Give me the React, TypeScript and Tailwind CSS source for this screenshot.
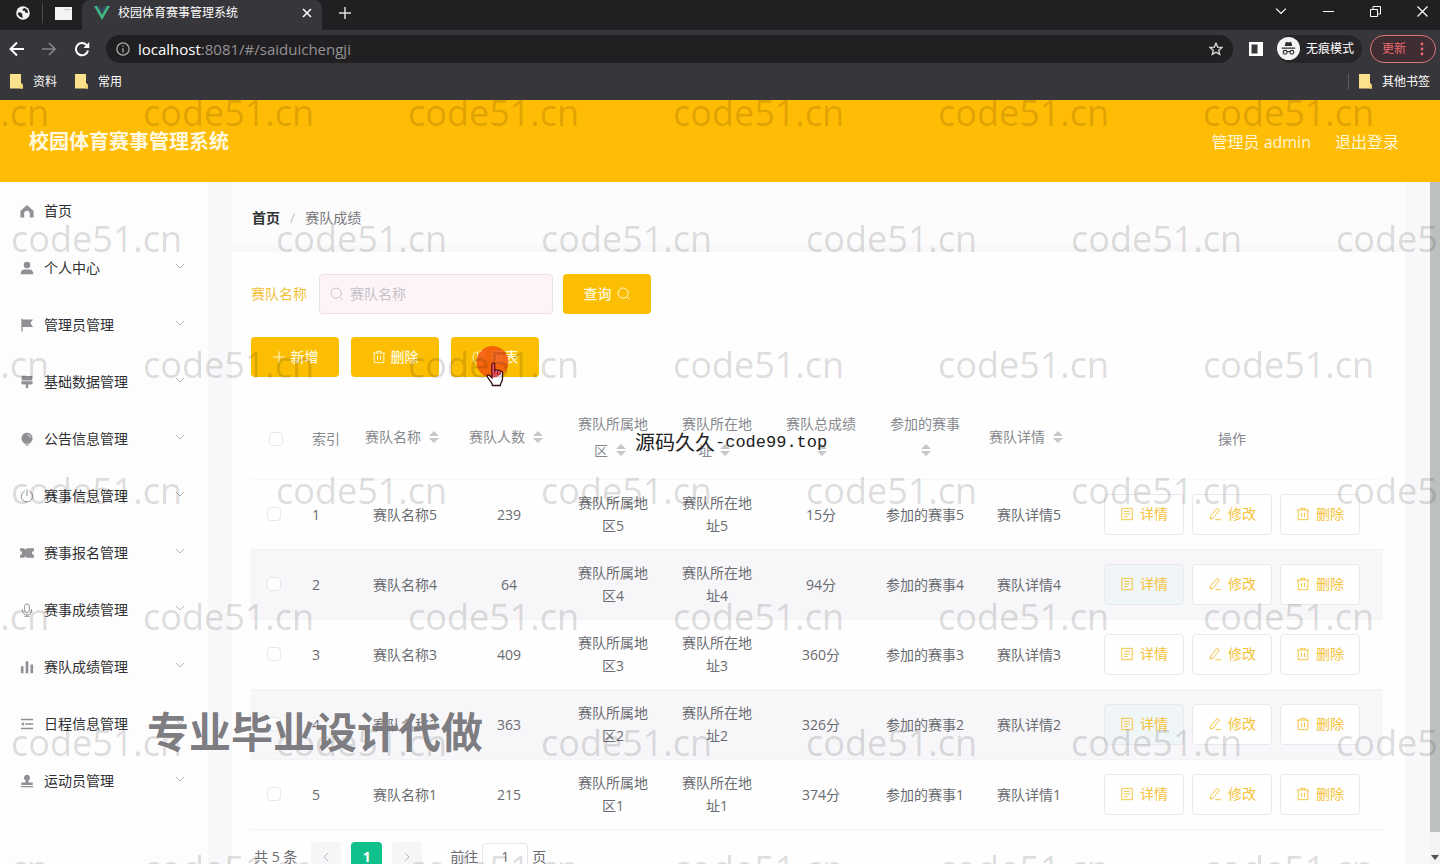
import type { ReactNode } from "react";

const menuItems = [
  { name: "首页", icon: "home", children: false },
  { name: "个人中心", icon: "user", children: true },
  { name: "管理员管理", icon: "flag", children: true },
  { name: "基础数据管理", icon: "brush", children: true },
  { name: "公告信息管理", icon: "bulb", children: true },
  { name: "赛事信息管理", icon: "power", children: true },
  { name: "赛事报名管理", icon: "ticket", children: true },
  { name: "赛事成绩管理", icon: "mic", children: true },
  { name: "赛队成绩管理", icon: "bars", children: true },
  { name: "日程信息管理", icon: "fold", children: true },
  { name: "运动员管理", icon: "stamp", children: true },
];

const columns = [
  "赛队名称",
  "赛队人数",
  "赛队所属地区",
  "赛队所在地址",
  "赛队总成绩",
  "参加的赛事",
  "赛队详情",
];

const teams = [
  { id: 5, people: 239, score: "15分" },
  { id: 4, people: 64, score: "94分" },
  { id: 3, people: 409, score: "360分" },
  { id: 2, people: 363, score: "326分" },
  { id: 1, people: 215, score: "374分" },
];

const menuIcons: Record<string, ReactNode> = {
  home: <path d="M8 1 .5 8V15.500h4.300V11a3.200 3.200 0 0 1 6.400 0v4.500h4.300V8z" />,
  user: (
    <>
      <circle cx="8" cy="4.5" r="3.7" />
      <path d="M.8 15c0-3.4 1.6-5.3 4.4-5.3h5.6c2.8 0 4.4 1.9 4.4 5.3z" />
    </>
  ),
  flag: <path d="M1.5.8H3v.9h11.8l-2.9 4.1 2.9 4.4H3V15.5H1.5z" />,
  brush: (
    <>
      <path d="M2 1h12v5.2H2zM1.5 7.2h13v1.6c0 1.2-.8 2-2 2h-9c-1.200 0-2-.8-2-2z" />
      <path d="M6.700 10.500h2.600V15H6.700z" />
    </>
  ),
  bulb: (
    <>
      <path d="M8 .8a6.300 6.300 0 0 0-3.700 11.400l.8 1.300h5.800l.8-1.300A6.300 6.300 0 0 0 8 .8zM5.800 14.300h4.400v1.200H5.800z" />
      <path d="M8.500 3c1.900.2 3.200 1.500 3.500 3.400" fill="none" stroke="#fff" strokeWidth="1" />
    </>
  ),
  power: (
    <path
      d="M5 2.400a6.600 6.600 0 1 0 6 0M8 1v6.500"
      fill="none"
      stroke="currentColor"
      strokeWidth="1.100"
      strokeLinecap="round"
    />
  ),
  ticket: (
    <path d="M0 2.500h4.800l1.400 1.700 1.400-1.700H16v3.200A2.300 2.300 0 0 0 16 10.300v3.200H7.600l-1.400-1.700-1.400 1.700H0v-3.200a2.300 2.300 0 0 0 0-4.600z" />
  ),
  mic: (
    <path
      d="M5.300 3.700a2.700 2.700 0 0 1 5.400 0v4.600a2.700 2.700 0 0 1-5.400 0zM2.800 7.500v1a5.200 5.200 0 0 0 10.400 0v-1M8 13.700v1.500M5.500 15.200h5"
      fill="none"
      stroke="currentColor"
      strokeWidth="1.100"
      strokeLinecap="round"
    />
  ),
  bars: <path d="M1 7.200h3V15H1zM6.500 1.500h3V15h-3zM12 5h3v10h-3z" />,
  fold: <path d="M1 2h14v1.700H1zM6 7.100h9v1.700H6zM1 12.300h14V14H1zM1 8l3.300-2.300v4.600z" />,
  stamp: (
    <path d="M8 1a3.400 3.400 0 0 0-2 6.200c.5.400.6 1.800-.3 2.400H1.500v3h13v-3h-4.200c-.9-.6-.8-2-.3-2.400A3.400 3.400 0 0 0 8 1zM1 13.700h14V15H1z" />
  ),
};

const lineIcons: Record<string, string> = {
  search: "M11.400 11.400 14.500 14.500M12.800 7a5.800 5.800 0 1 1-11.600 0 5.800 5.800 0 0 1 11.600 0z",
  plus: "M8 1.500v13M1.500 8h13",
  trash: "M1 3.500h14M5.500 3.500V1.500h5v2M2.500 3.500v11h11v-11M6.300 6.500v5M9.700 6.500v5",
  pie: "M6.500 2A6.500 6.500 0 1 0 14 9.500H6.500zM9.500 1A5.500 5.500 0 0 1 15 6.500H9.500z",
  doc: "M2 1.500h12v13H2zM4.800 5h6.400M4.800 8h6.400M4.800 11h4",
  edit: "M10.300 1.500 13 3.700 6 12.700l-3.300 1.100.4-3.500zM8.500 14.500H15",
};

function LineIcon({ name }: { name: string }) {
  return (
    <svg
      viewBox="0 0 16 16"
      className="size-3.5 shrink-0"
      fill="none"
      stroke="currentColor"
      strokeWidth="1.100"
    >
      <path d={lineIcons[name]} />
    </svg>
  );
}

function Chevron({ className }: { className: string }) {
  return (
    <svg viewBox="0 0 10 10" className={className} fill="none" stroke="currentColor">
      <path d="M1 3l4 4 4-4" />
    </svg>
  );
}

function Folder() {
  return (
    <svg viewBox="0 0 13 15" className="h-[15px] w-[13px]">
      <path d="M0 0h11v9l2 2v3.500H0z" fill="#fbe18d" />
      <path d="M11 9l2 2v3.500h-3z" fill="#f0d070" />
    </svg>
  );
}

function SortCaret() {
  return (
    <svg viewBox="0 0 10 12" className="-mt-1 mr-1.5 ml-2 inline-block h-3 w-2.5 align-middle" fill="#c6c7cb">
      <path d="M5 0l5 5H0zM0 7h10l-5 5z" />
    </svg>
  );
}

function BrowserBar() {
  return (
    <div className="shrink-0 bg-[#37363a] text-xs text-white">
      <div className="flex h-[30px] items-center bg-[#211f21]">
        <div className="flex h-full w-[82px] items-center gap-3 pb-1 pl-4">
          <svg viewBox="0 0 16 16" className="size-3.5">
            <circle cx="8" cy="8" r="7.800" fill="#f3f3f3" />
            <path
              d="M2 7.500h3.500l2 2-.5 1.200 1 2.600A5.800 5.800 0 0 1 2 7.500zM9.500 2.200 7.300 3.800l.6 1.700h2.300l.6 2.200h3A5.800 5.800 0 0 0 9.500 2.200z"
              fill="#211f21"
            />
          </svg>
          <span className="h-5 w-px bg-[#4a494c]"></span>
          <svg viewBox="0 0 17 13" className="h-[13px] w-[17px]">
            <path d="M0 0h17v13H0z" fill="#f3f3f3" />
            <path d="M9 2.500h7" stroke="#c9c9c9" />
          </svg>
        </div>
        <div className="flex h-full w-60 items-center rounded-t-lg bg-[#37363a] pr-2.5 pb-1 pl-3">
          <svg viewBox="0 0 16 14" className="mr-2 h-3.5 w-4">
            <path d="M0 0h3.200L8 8.500 12.800 0H16L8 14z" fill="#41b883" />
            <path d="M3.200 0h2.900L8 3.300 9.900 0h2.900L8 8.500z" fill="#35495e" />
          </svg>
          <span className="flex-1">校园体育赛事管理系统</span>
          <button aria-label="关闭标签页">
            <svg viewBox="0 0 10 10" className="size-2.5" stroke="#fff" strokeWidth="1.500">
              <path d="M1 1l8 8M9 1L1 9" />
            </svg>
          </button>
        </div>
        <button aria-label="新标签页" className="ml-4 pb-1">
          <svg viewBox="0 0 14 14" className="size-3.5" stroke="#ddd" strokeWidth="1.500">
            <path d="M7 1v12M1 7h12" />
          </svg>
        </button>
        <div className="ml-auto flex items-center gap-9 pr-3 pb-2">
          <Chevron className="size-3" />
          <svg viewBox="0 0 11 11" className="size-[11px]" stroke="#fff">
            <path d="M0 5.500h11" />
          </svg>
          <svg viewBox="0 0 11 11" className="size-[11px]" stroke="#fff" fill="none">
            <path d="M.5 3.500h7v7h-7zM3 3.500v-3h7.500V8h-3" />
          </svg>
          <svg viewBox="0 0 11 11" className="size-[11px]" stroke="#fff" strokeWidth="1.200">
            <path d="M.5.500l10 10M10.500.500l-10 10" />
          </svg>
        </div>
      </div>

      <div className="flex h-[37px] items-center pr-1 pl-2">
        <svg viewBox="0 0 18 16" className="h-4 w-[18px]" fill="none" stroke="#fff" strokeWidth="2">
          <path d="M16 8H2.500M9 1.500 2.500 8 9 14.500" />
        </svg>
        <svg viewBox="0 0 18 16" className="ml-3.5 h-4 w-[18px]" fill="none" stroke="#858488" strokeWidth="1.700">
          <path d="M2 8h13M9 2l6 6-6 6" />
        </svg>
        <svg viewBox="0 0 16 16" className="ml-4 size-4" fill="none" stroke="#fff" strokeWidth="2">
          <path d="M14 9.500A6.100 6.100 0 1 1 12.500 4" />
          <path d="M15.300 1v6H9.500z" fill="#fff" stroke="none" />
        </svg>
        <div className="ml-4 flex h-7 flex-1 items-center rounded-full bg-[#211f21] px-2.5">
          <svg viewBox="0 0 16 16" className="mr-2 size-3.5" fill="none" stroke="#a9a9ab" strokeWidth="1.500">
            <circle cx="8" cy="8" r="7" />
            <path d="M8 7v5M8 4v1.500" />
          </svg>
          <span className="flex-1 text-[15px] text-[#939296]">
            <span className="text-white">localhost</span>:8081/#/saiduichengji
          </span>
          <svg viewBox="0 0 16 16" className="size-3.5" fill="none" stroke="#ddd" strokeWidth="1.500">
            <path d="M8 1.300l1.900 4.500 4.900.4-3.700 3.200 1.100 4.800L8 11.700l-4.200 2.500 1.100-4.800L1.200 6.200l4.900-.4z" />
          </svg>
        </div>
        <svg viewBox="0 0 14 14" className="mr-3.5 ml-4 size-3.5">
          <path d="M0 0h14v14H0z" fill="#fff" />
          <path d="M2.500 2.500h6v9h-6z" fill="#37363a" />
        </svg>
        <div className="flex h-7 items-center gap-1.5 rounded-full bg-[#272528] pr-2">
          <svg viewBox="0 0 24 24" className="size-[23px]">
            <circle cx="12" cy="12" r="12" fill="#f4f4f4" />
            <path d="M8 9.500 9.300 5l2.700.7 2.700-.7L16 9.500zM5 11h14v1.200H5z" fill="#2b2a2d" />
            <path d="M10.500 16a2 2 0 1 1-4 0 2 2 0 0 1 4 0zM17.500 16a2 2 0 1 1-4 0 2 2 0 0 1 4 0zM10.500 15.500q1.500-.8 3 0" fill="none" stroke="#2b2a2d" strokeWidth="1.200" />
          </svg>
          无痕模式
        </div>
        <button className="ml-2 flex h-7 items-center gap-3.5 rounded-full border border-[#d87a7c] bg-[#3f2d32] px-[11px] text-[#e8696c]">
          更新
          <svg viewBox="0 0 4 14" className="h-3.5 w-1" fill="currentColor">
            <circle cx="2" cy="2" r="1.400" />
            <circle cx="2" cy="7" r="1.400" />
            <circle cx="2" cy="12" r="1.400" />
          </svg>
        </button>
      </div>

      <div className="flex h-[33px] items-center gap-[18px] px-2.5 pb-1">
        <a href="#" className="flex items-center gap-2.5">
          <Folder />
          资料
        </a>
        <a href="#" className="flex items-center gap-2.5">
          <Folder />
          常用
        </a>
        <a href="#" className="ml-auto flex items-center gap-2.5">
          <span className="h-4 w-px bg-[#5c5b5f]"></span>
          <Folder />
          其他书签
        </a>
      </div>
    </div>
  );
}

function Sidebar() {
  return (
    <nav className="w-52 shrink-0 bg-[#fefdfe]">
      {menuItems.map((item) => (
        <a
          key={item.name}
          href="#"
          className="flex h-[57px] items-center pr-[23px] pl-5 text-sm text-[#303133]"
        >
          <svg viewBox="0 0 16 16" className="mr-2.5 size-3.5 text-[#8f9093]" fill="currentColor">
            {menuIcons[item.icon]}
          </svg>
          <span className="flex-1">{item.name}</span>
          {item.children && <Chevron className="mb-1 size-2.5 text-[#b5b7bb]" />}
        </a>
      ))}
    </nav>
  );
}

function PrimaryButton({ children }: { children: ReactNode }) {
  return (
    <button className="flex h-10 w-[88px] items-center justify-center gap-[5px] rounded bg-[#fcbe03] text-sm font-medium text-[#fff8dc]">
      {children}
    </button>
  );
}

function RowButton({ icon, label, tint }: { icon: string; label: string; tint?: boolean }) {
  return (
    <button
      className={`flex h-[41px] w-20 items-center justify-center gap-1.5 rounded-sm border border-[#eae8ee] text-sm text-[#f5c33b] ${
        tint ? "bg-[#f0f5f8]" : "bg-[#fefefe]"
      }`}
    >
      <LineIcon name={icon} />
      {label}
    </button>
  );
}

function Checkbox({ label }: { label: string }) {
  return (
    <input
      type="checkbox"
      aria-label={label}
      className="block size-3.5 appearance-none rounded-sm border border-[#e8e8ec] bg-white"
    />
  );
}

function TeamTable() {
  return (
    <table className="mt-[22px] w-full table-fixed text-center text-sm text-[#6a6b70]">
      <colgroup>
        <col className="w-[52px]" />
        <col className="w-[51px]" />
        {columns.map((column) => (
          <col key={column} />
        ))}
        <col className="w-[302px]" />
      </colgroup>
      <thead>
        <tr className="h-20 border-b border-[#f8f7f9] leading-[27px] text-[#88898e]">
          <th className="pl-[19px] font-normal">
            <Checkbox label="全选" />
          </th>
          <th className="pl-2.5 text-left font-normal">索引</th>
          {columns.map((column) => (
            <th key={column} className="px-[11px] pb-1 font-normal">
              {column}
              <SortCaret />
            </th>
          ))}
          <th className="font-normal">操作</th>
        </tr>
      </thead>
      <tbody>
        {teams.map((team, index) => (
          <tr
            key={team.id}
            className="h-[70px] border-b border-[#f3f2f5] leading-[23px] even:bg-[#f7f6f9]"
          >
            <td className="pl-[17px]">
              <Checkbox label={`选择赛队名称${team.id}`} />
            </td>
            <td className="pl-2.5 text-left">{index + 1}</td>
            <td className="px-3">赛队名称{team.id}</td>
            <td className="px-3">{team.people}</td>
            <td className="px-3">赛队所属地区{team.id}</td>
            <td className="px-3">赛队所在地址{team.id}</td>
            <td className="px-3">{team.score}</td>
            <td className="px-3">参加的赛事{team.id}</td>
            <td className="px-3">赛队详情{team.id}</td>
            <td>
              <div className="flex justify-center gap-2">
                <RowButton icon="doc" label="详情" tint={index % 2 === 1} />
                <RowButton icon="edit" label="修改" />
                <RowButton icon="trash" label="删除" />
              </div>
            </td>
          </tr>
        ))}
      </tbody>
    </table>
  );
}

function Pagination() {
  return (
    <div className="mt-3 flex items-center text-sm text-[#6a6b70]">
      <span className="mr-3.5 ml-1">共 5 条</span>
      <button aria-label="上一页" className="flex h-[30px] w-[30px] items-center justify-center rounded-sm bg-[#f6f5f7]">
        <Chevron className="size-2.5 rotate-90 text-[#b5b7bb]" />
      </button>
      <button className="mx-2.5 h-[30px] w-[31px] rounded-sm bg-[#0fbf8c] font-bold text-white">1</button>
      <button aria-label="下一页" className="flex h-[30px] w-[30px] items-center justify-center rounded-sm bg-[#f6f5f7]">
        <Chevron className="size-2.5 -rotate-90 text-[#b5b7bb]" />
      </button>
      <label htmlFor="page" className="mr-1 ml-7">
        前往
      </label>
      <input
        id="page"
        defaultValue="1"
        className="mr-1 h-7 w-[46px] rounded-sm border border-[#e6e4ea] bg-white text-center"
      />
      页
    </div>
  );
}

function Watermark() {
  return (
    <div
      aria-hidden="true"
      className="pointer-events-none absolute inset-0 overflow-hidden text-4xl leading-[26px] text-black/15"
    >
      {[0, 1, 2, 3, 4, 5, 6].map((row) => (
        <div key={row} className={`flex h-[126px] ${row % 2 ? "ml-[11px]" : "-ml-[122px]"}`}>
          {[0, 1, 2, 3, 4, 5].map((n) => (
            <span key={n} className="w-[265px] shrink-0">
              code51.cn
            </span>
          ))}
        </div>
      ))}
    </div>
  );
}

export default function App() {
  return (
    <div className="flex h-screen flex-col overflow-hidden bg-white font-['Open_Sans','Noto_Sans_CJK_SC',sans-serif]">
      <BrowserBar />
      <div className="relative flex min-h-0 flex-1 flex-col overflow-hidden">
        <header className="flex h-[82px] shrink-0 items-center bg-[#ffbc04] pt-0.5 pr-[41px] pl-[29px] text-white">
          <h1 className="flex-1 text-xl font-bold text-[#fff9e0]">校园体育赛事管理系统</h1>
          <span className="mr-6 text-[#fff6d2]">管理员 admin</span>
          <a href="#" className="text-[#fff6d2]">
            退出登录
          </a>
        </header>

        <div className="flex min-h-0 flex-1">
          <Sidebar />
          <main className="min-w-0 flex-1 bg-[#f8f7f9] pr-[25px] pl-6">
            <div className="flex h-[63px] items-center gap-2.5 bg-[#fdfcfd] pt-2 pl-5 text-sm">
              <a href="#" className="font-bold text-[#303133]">
                首页
              </a>
              <span className="text-[#c0c4cc]">/</span>
              <span className="text-[#77787c]">赛队成绩</span>
            </div>
            <div className="mt-[7px] min-h-full bg-[#fefefe] pt-[22px] pr-[22px] pl-[18px]">
              <form className="flex items-center pl-px" onSubmit={(e) => e.preventDefault()}>
                <label htmlFor="team-name" className="mr-3 text-sm text-[#f3bf35]">
                  赛队名称
                </label>
                <div className="mr-2.5 flex h-10 w-[234px] items-center gap-1.5 rounded border border-[#ecdfe5] bg-[#fdf4f7] pl-2.5 text-[#c5c2c8]">
                  <LineIcon name="search" />
                  <input
                    id="team-name"
                    placeholder="赛队名称"
                    className="min-w-0 flex-1 bg-transparent text-sm outline-none placeholder:text-[#c5c2c8]"
                  />
                </div>
                <PrimaryButton>
                  查询
                  <LineIcon name="search" />
                </PrimaryButton>
              </form>
              <div className="mt-[23px] flex gap-3 pl-px">
                <PrimaryButton>
                  <LineIcon name="plus" />
                  新增
                </PrimaryButton>
                <PrimaryButton>
                  <LineIcon name="trash" />
                  删除
                </PrimaryButton>
                <div className="relative">
                  <PrimaryButton>
                    <LineIcon name="pie" />
                    报表
                  </PrimaryButton>
                  {/* click highlight and pointer */}
                  <svg viewBox="0 0 34 44" className="pointer-events-none absolute top-2 left-6 h-11 w-[34px]">
                    <circle cx="17.500" cy="17" r="16" fill="#f2500c" fillOpacity=".82" />
                    <path
                      d="M17 19.500c0-1.800 2.600-1.800 2.600 0v6.300l1-.1c.2-1.200 2.100-1 2.300.3.500-.9 2-.7 2.300.6.700-.7 2.300-.3 2.300 1.200v5.700c0 2.700-1.300 3.900-1.800 5.200l-.4 1.800h-7.800l-.6-2.200-4.400-6.100c-1-1.500.6-2.900 1.900-1.800l2.600 2.300z"
                      fill="#fff"
                      stroke="#301010"
                      strokeWidth="1.300"
                    />
                    <path
                      d="M17.200 19.500c0-1.300 2.200-1.300 2.200 0v6.700l1.400-.1c.5-1 1.700-.6 2 .4.500-.8 1.700-.4 2 .4.500-.6 1.800-.2 1.800.9L23 31.500l-5.800 1.300z"
                      fill="#ee5560"
                    />
                    <path d="M17 33V19.500c0-1.800 2.600-1.800 2.600 0V29M22.500 26.500V30M25 27.500V30" fill="none" stroke="#7d1520" strokeWidth="1" />
                  </svg>
                </div>
              </div>
              <TeamTable />
              <Pagination />
            </div>
          </main>
          <div className="flex w-2.5 flex-col bg-[#f3f2f4]">
            <div className="flex-1 bg-[#bcc0bf]"></div>
            <div className="flex h-8 items-end justify-center pb-1">
              <svg viewBox="0 0 8 5" className="h-[5px] w-2" fill="#505050">
                <path d="M0 0h8L4 5z" />
              </svg>
            </div>
          </div>
        </div>

        <Watermark />
        <p className="pointer-events-none absolute top-[329px] left-[635px] flex items-center text-xl text-[#222]">
          源码久久
          <span className="font-['Liberation_Mono',monospace] text-[17px]">-code99.top</span>
        </p>
        <p className="pointer-events-none absolute top-[602px] left-[147px] text-[42px] leading-[60px] font-bold text-[#6c6b6f]/90 [text-shadow:0_0_2px_#fff]">
          专业毕业设计代做
        </p>
      </div>
    </div>
  );
}
